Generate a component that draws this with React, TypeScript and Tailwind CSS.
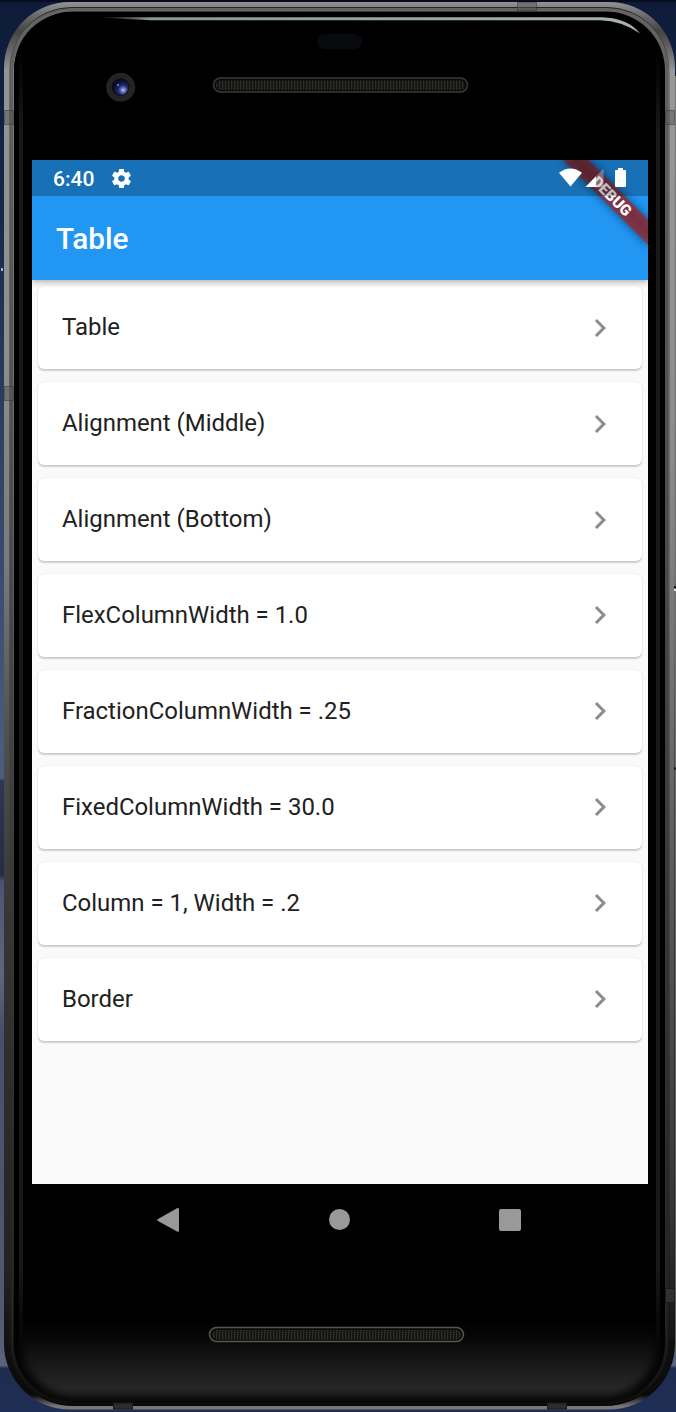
import React from "react";

const items: string[] = [
  "Table",
  "Alignment (Middle)",
  "Alignment (Bottom)",
  "FlexColumnWidth = 1.0",
  "FractionColumnWidth = .25",
  "FixedColumnWidth = 30.0",
  "Column = 1, Width = .2",
  "Border",
];

/** Wallpaper and phone hardware illustration behind the screen. */
function PhoneBody() {
  return (
    <svg className="absolute inset-0" width="676" height="1412" viewBox="0 0 676 1412" aria-hidden="true">
      <defs>
        <linearGradient id="wall" x1="0" y1="0" x2="0" y2="1">
          <stop offset="0" stopColor="#0e1b38" />
          <stop offset=".14" stopColor="#14264a" />
          <stop offset=".3" stopColor="#2c4064" />
          <stop offset=".42" stopColor="#3a4d75" />
          <stop offset=".551" stopColor="#4c5d80" />
          <stop offset=".553" stopColor="#2f3552" />
          <stop offset=".62" stopColor="#262c48" />
          <stop offset=".624" stopColor="#4b5372" />
          <stop offset=".69" stopColor="#5e667f" />
          <stop offset=".73" stopColor="#474f6c" />
          <stop offset=".93" stopColor="#515975" />
          <stop offset=".967" stopColor="#5a627c" />
          <stop offset=".969" stopColor="#1f2c50" />
          <stop offset="1" stopColor="#1f2e55" />
        </linearGradient>
        <linearGradient id="metal" gradientUnits="userSpaceOnUse" x1="0" y1="0" x2="0" y2="1412">
          <stop offset="0" stopColor="#999" />
          <stop offset=".008" stopColor="#777" />
          <stop offset=".022" stopColor="#444" />
          <stop offset=".035" stopColor="#666" />
          <stop offset=".05" stopColor="#949494" />
          <stop offset=".25" stopColor="#8e8e8e" />
          <stop offset=".4" stopColor="#7a7a7a" />
          <stop offset=".52" stopColor="#505050" />
          <stop offset=".65" stopColor="#363636" />
          <stop offset=".9" stopColor="#232323" />
          <stop offset=".95" stopColor="#101010" />
          <stop offset=".988" stopColor="#0a0a0a" />
          <stop offset=".996" stopColor="#777" />
        </linearGradient>
        <linearGradient id="metalRight" x1="0" y1="0" x2="0" y2="1">
          <stop offset="0" stopColor="#999" />
          <stop offset=".3" stopColor="#8b8b8b" />
          <stop offset=".6" stopColor="#606060" />
          <stop offset=".9" stopColor="#363636" />
          <stop offset="1" stopColor="#151515" />
        </linearGradient>
        <linearGradient id="sliver" x1="0" y1="0" x2="0" y2="1">
          <stop offset="0" stopColor="#777" />
          <stop offset="1" stopColor="#626262" />
        </linearGradient>
        <linearGradient id="lip" gradientUnits="userSpaceOnUse" x1="0" y1="0" x2="0" y2="1412">
          <stop offset="0" stopColor="#646464" />
          <stop offset=".4" stopColor="#4a4a4a" />
          <stop offset=".93" stopColor="#242424" />
          <stop offset="1" stopColor="#0c0c0c" />
        </linearGradient>
        <linearGradient id="seam" gradientUnits="userSpaceOnUse" x1="0" y1="0" x2="0" y2="1412">
          <stop offset="0" stopColor="#222" />
          <stop offset=".05" stopColor="#5a5a5a" />
          <stop offset=".5" stopColor="#444" />
          <stop offset=".9" stopColor="#1c1c1c" />
          <stop offset="1" stopColor="#050505" />
        </linearGradient>
        <linearGradient id="floor" x1="0" y1="0" x2="0" y2="1">
          <stop offset="0" stopColor="#000" stopOpacity="0" />
          <stop offset=".45" stopColor="#101010" />
          <stop offset="1" stopColor="#303030" />
        </linearGradient>
        <linearGradient id="side" x1="0" y1="0" x2="0" y2="1">
          <stop offset="0" stopColor="#181818" stopOpacity="0" />
          <stop offset=".06" stopColor="#181818" />
          <stop offset=".94" stopColor="#181818" />
          <stop offset="1" stopColor="#181818" stopOpacity="0" />
        </linearGradient>
        <linearGradient id="glare" x1="0" y1="0" x2="1" y2="0">
          <stop offset="0" stopColor="#8d9696" stopOpacity="0" />
          <stop offset=".1" stopColor="#8d9696" />
          <stop offset="1" stopColor="#a9b2b1" />
        </linearGradient>
        <radialGradient id="lens" cx=".66" cy=".68" r=".65">
          <stop offset="0" stopColor="#c0c8f5" />
          <stop offset=".25" stopColor="#5c69b8" />
          <stop offset=".5" stopColor="#1c2869" />
          <stop offset="1" stopColor="#0a0d22" />
        </radialGradient>
        <pattern id="mesh" width="3" height="2" patternUnits="userSpaceOnUse">
          <rect width="3" height="2" fill="#141311" />
          <rect width="1" height="2" fill="#2f2d29" />
          <rect x="1" width="1" height="1" fill="#24221e" />
        </pattern>
        <filter id="soft" x="-5%" y="-5%" width="110%" height="110%">
          <feGaussianBlur stdDeviation="5" />
        </filter>
        <clipPath id="glass">
          <rect x="14" y="12" width="650" height="1390" rx="58" />
        </clipPath>
      </defs>
      <rect width="676" height="1412" fill="url(#wall)" />
      <rect width="676" height="2" fill="#070d1c" />
      <rect x="674" y="76" width="2" height="1276" fill="url(#sliver)" />
      <rect x="4" y="2" width="671" height="1407.5" rx="66" fill="url(#metal)" />
      <rect x="669" y="70" width="5" height="1270" fill="url(#metalRight)" />
      <rect x="11.5" y="9" width="655" height="1395" rx="61" fill="none" stroke="url(#lip)" strokeWidth="4" />
      <rect x="10" y="7.5" width="659" height="1397.5" rx="62" fill="none" stroke="url(#seam)" strokeWidth="1" />
      <rect x="14" y="11.5" width="651" height="1391" rx="59" fill="#000" />
      <g clipPath="url(#glass)">
        <rect x="15" y="1310" width="649" height="92" fill="url(#floor)" />
        <rect x="14" y="8" width="650" height="1394" rx="60" fill="none" stroke="#000" strokeWidth="12" filter="url(#soft)" />
        <rect x="19" y="50" width="4" height="1300" fill="url(#side)" />
        <rect x="656" y="50" width="4" height="1300" fill="url(#side)" />
      </g>
      <path d="M96 17.2H602Q628 18 640 33.5Q622 20.8 600 20.2H150Z" fill="url(#glare)" />
      <g fill="#555" fillOpacity=".5" stroke="#333" strokeOpacity=".5" strokeWidth="1">
        <rect x="4.5" y="110.5" width="9" height="14" />
        <rect x="665.5" y="110.5" width="9" height="14" />
        <rect x="4.5" y="386.5" width="9" height="14" />
        <rect x="517.5" y="2.5" width="19" height="8" />
      </g>
      <rect x="665.5" y="1288.5" width="9" height="14" fill="#303030" stroke="#1c1c1c" />
      <rect x="113.5" y="1403" width="19" height="6" fill="#2c2c2c" stroke="#191919" />
      <rect x="547.5" y="1403" width="19" height="6" fill="#2c2c2c" stroke="#191919" />
      <path d="M674 587h2M674 768.5h2" stroke="#111" strokeWidth="2" />
      <rect x="674" y="589" width="2" height="2" fill="#ddd" />
      <rect x="1" y="268" width="2" height="3" fill="#aab4c4" />
      <rect x="317" y="34" width="45" height="15" rx="7.5" fill="#080a0e" />
      <circle cx="120.7" cy="87.3" r="14.5" fill="#252325" />
      <circle cx="120.5" cy="87" r="8.8" fill="#0a0c18" />
      <circle cx="120.7" cy="87.3" r="7.8" fill="url(#lens)" />
      <circle cx="118" cy="85" r="1" fill="#8089d8" />
      <rect x="213.5" y="78" width="254" height="14" rx="7" fill="#0b0b0b" stroke="#3b3939" strokeWidth="1.5" />
      <rect x="216" y="80.5" width="249" height="9.5" rx="4.7" fill="url(#mesh)" />
      <rect x="209.5" y="1327.5" width="254" height="14" rx="7" fill="#0b0b0b" stroke="#565452" strokeWidth="1.5" />
      <rect x="212" y="1330" width="249" height="9.5" rx="4.7" fill="url(#mesh)" />
    </svg>
  );
}

function DebugBanner() {
  return (
    <svg className="absolute top-0 right-0" width="120" height="120" viewBox="0 0 120 120">
      <defs>
        <filter id="bshadow" x="-30%" y="-80%" width="160%" height="300%">
          <feGaussianBlur stdDeviation="5" />
        </filter>
      </defs>
      <g transform="translate(120 0) rotate(45)">
        <rect x="-60" y="42" width="120" height="18" fill="#000" fillOpacity=".5" filter="url(#bshadow)" />
        <rect x="-62" y="42" width="124" height="18" fill="#b71c1c" fillOpacity=".627" />
        <text
          x="0"
          y="56.5"
          textAnchor="middle"
          fill="#fff"
          className="font-['Roboto',sans-serif] text-[15.3px] font-black"
        >
          DEBUG
        </text>
      </g>
    </svg>
  );
}

function StatusBar() {
  return (
    <div className="relative flex h-9 items-center bg-black/25 px-[21px] text-white">
      <span className="pt-px text-[21px] leading-9 font-medium">6:40</span>
      <svg className="ml-[16px]" width="23" height="23" viewBox="0 0 24 24" fill="currentColor">
        <path d="M19.43 12.98c.04-.32.07-.64.07-.98s-.03-.66-.07-.98l2.11-1.65c.19-.15.24-.42.12-.64l-2-3.46c-.12-.22-.39-.3-.61-.22l-2.49 1c-.52-.4-1.08-.73-1.69-.98l-.38-2.65C14.46 2.18 14.25 2 14 2h-4c-.25 0-.46.18-.49.42l-.38 2.65c-.61.25-1.17.59-1.69.98l-2.49-1c-.23-.09-.49 0-.61.22l-2 3.46c-.13.22-.07.49.12.64l2.11 1.65c-.04.32-.07.65-.07.98s.03.66.07.98l-2.11 1.65c-.19.15-.24.42-.12.64l2 3.46c.12.22.39.3.61.22l2.49-1c.52.4 1.08.73 1.69.98l.38 2.65c.03.24.24.42.49.42h4c.25 0 .46-.18.49-.42l.38-2.65c.61-.25 1.17-.59 1.69-.98l2.49 1c.23.09.49 0 .61-.22l2-3.46c.12-.22.07-.49-.12-.64l-2.11-1.65zM12 15.5c-1.93 0-3.5-1.57-3.5-3.5s1.57-3.5 3.5-3.5 3.5 1.57 3.5 3.5-1.57 3.5-3.5 3.5z" />
      </svg>
      <svg className="ml-auto" width="68" height="20" viewBox="0 0 68 20" fill="currentColor">
        <path d="M0 4.8Q11.5-3.8 23 4.8L11.5 18.6Z" />
        <path d="M44.5 .8V19H26.5Z" fillOpacity=".3" />
        <path d="M37 8.3V19H26.5Z" />
        <path d="M59 0h5v2h2q1 0 1 1v15q0 1-1 1h-9q-1 0-1-1V3q0-1 1-1h2z" />
      </svg>
    </div>
  );
}

function NavBar() {
  return (
    <div className="flex h-[72px] items-center justify-between pr-[127px] pl-[125px]">
      <svg width="22" height="26" viewBox="0 0 22 26" fill="#999">
        <path d="M1 12L20 1.3Q22 .6 22 2.5V23.5Q22 25.4 20 24.4L1 14Q-.6 13 1 12Z" />
      </svg>
      <div className="mb-px size-[21px] rounded-full bg-[#999]" />
      <div className="size-[22px] rounded-[2px] bg-[#999]" />
    </div>
  );
}

export default function App() {
  return (
    <div className="relative h-[1412px] w-[676px] overflow-hidden bg-black font-['Roboto',sans-serif]">
      <PhoneBody />
      <div className="relative pt-40 pr-7 pl-8">
        <div className="flex h-[1024px] w-[616px] flex-col overflow-hidden bg-[#fafafa]">
          <header className="relative shrink-0 bg-[#2196f3] shadow-[0_2px_6px_rgba(0,0,0,0.3)]">
            <DebugBanner />
            <StatusBar />
            <h1 className="flex h-[84px] items-center pt-0.5 pl-6 text-[29.8px] font-medium text-white">Table</h1>
          </header>
          <main className="flex flex-col gap-[12.6px] p-1.5">
            {items.map((item) => (
              <div
                key={item}
                className="flex h-[83.35px] shrink-0 items-center justify-between rounded-md bg-white px-6 text-[23.94px] text-[#212121] shadow-[0_1.5px_1.5px_rgba(0,0,0,0.17),0_0_2px_rgba(0,0,0,0.1)]"
              >
                <span className="mt-px">{item}</span>
                <svg width="36" height="36" viewBox="0 0 24 24" fill="#8c8c8c">
                  <path d="M10 6L8.59 7.41 13.17 12l-4.58 4.59L10 18l6-6z" />
                </svg>
              </div>
            ))}
          </main>
        </div>
        <NavBar />
      </div>
    </div>
  );
}
